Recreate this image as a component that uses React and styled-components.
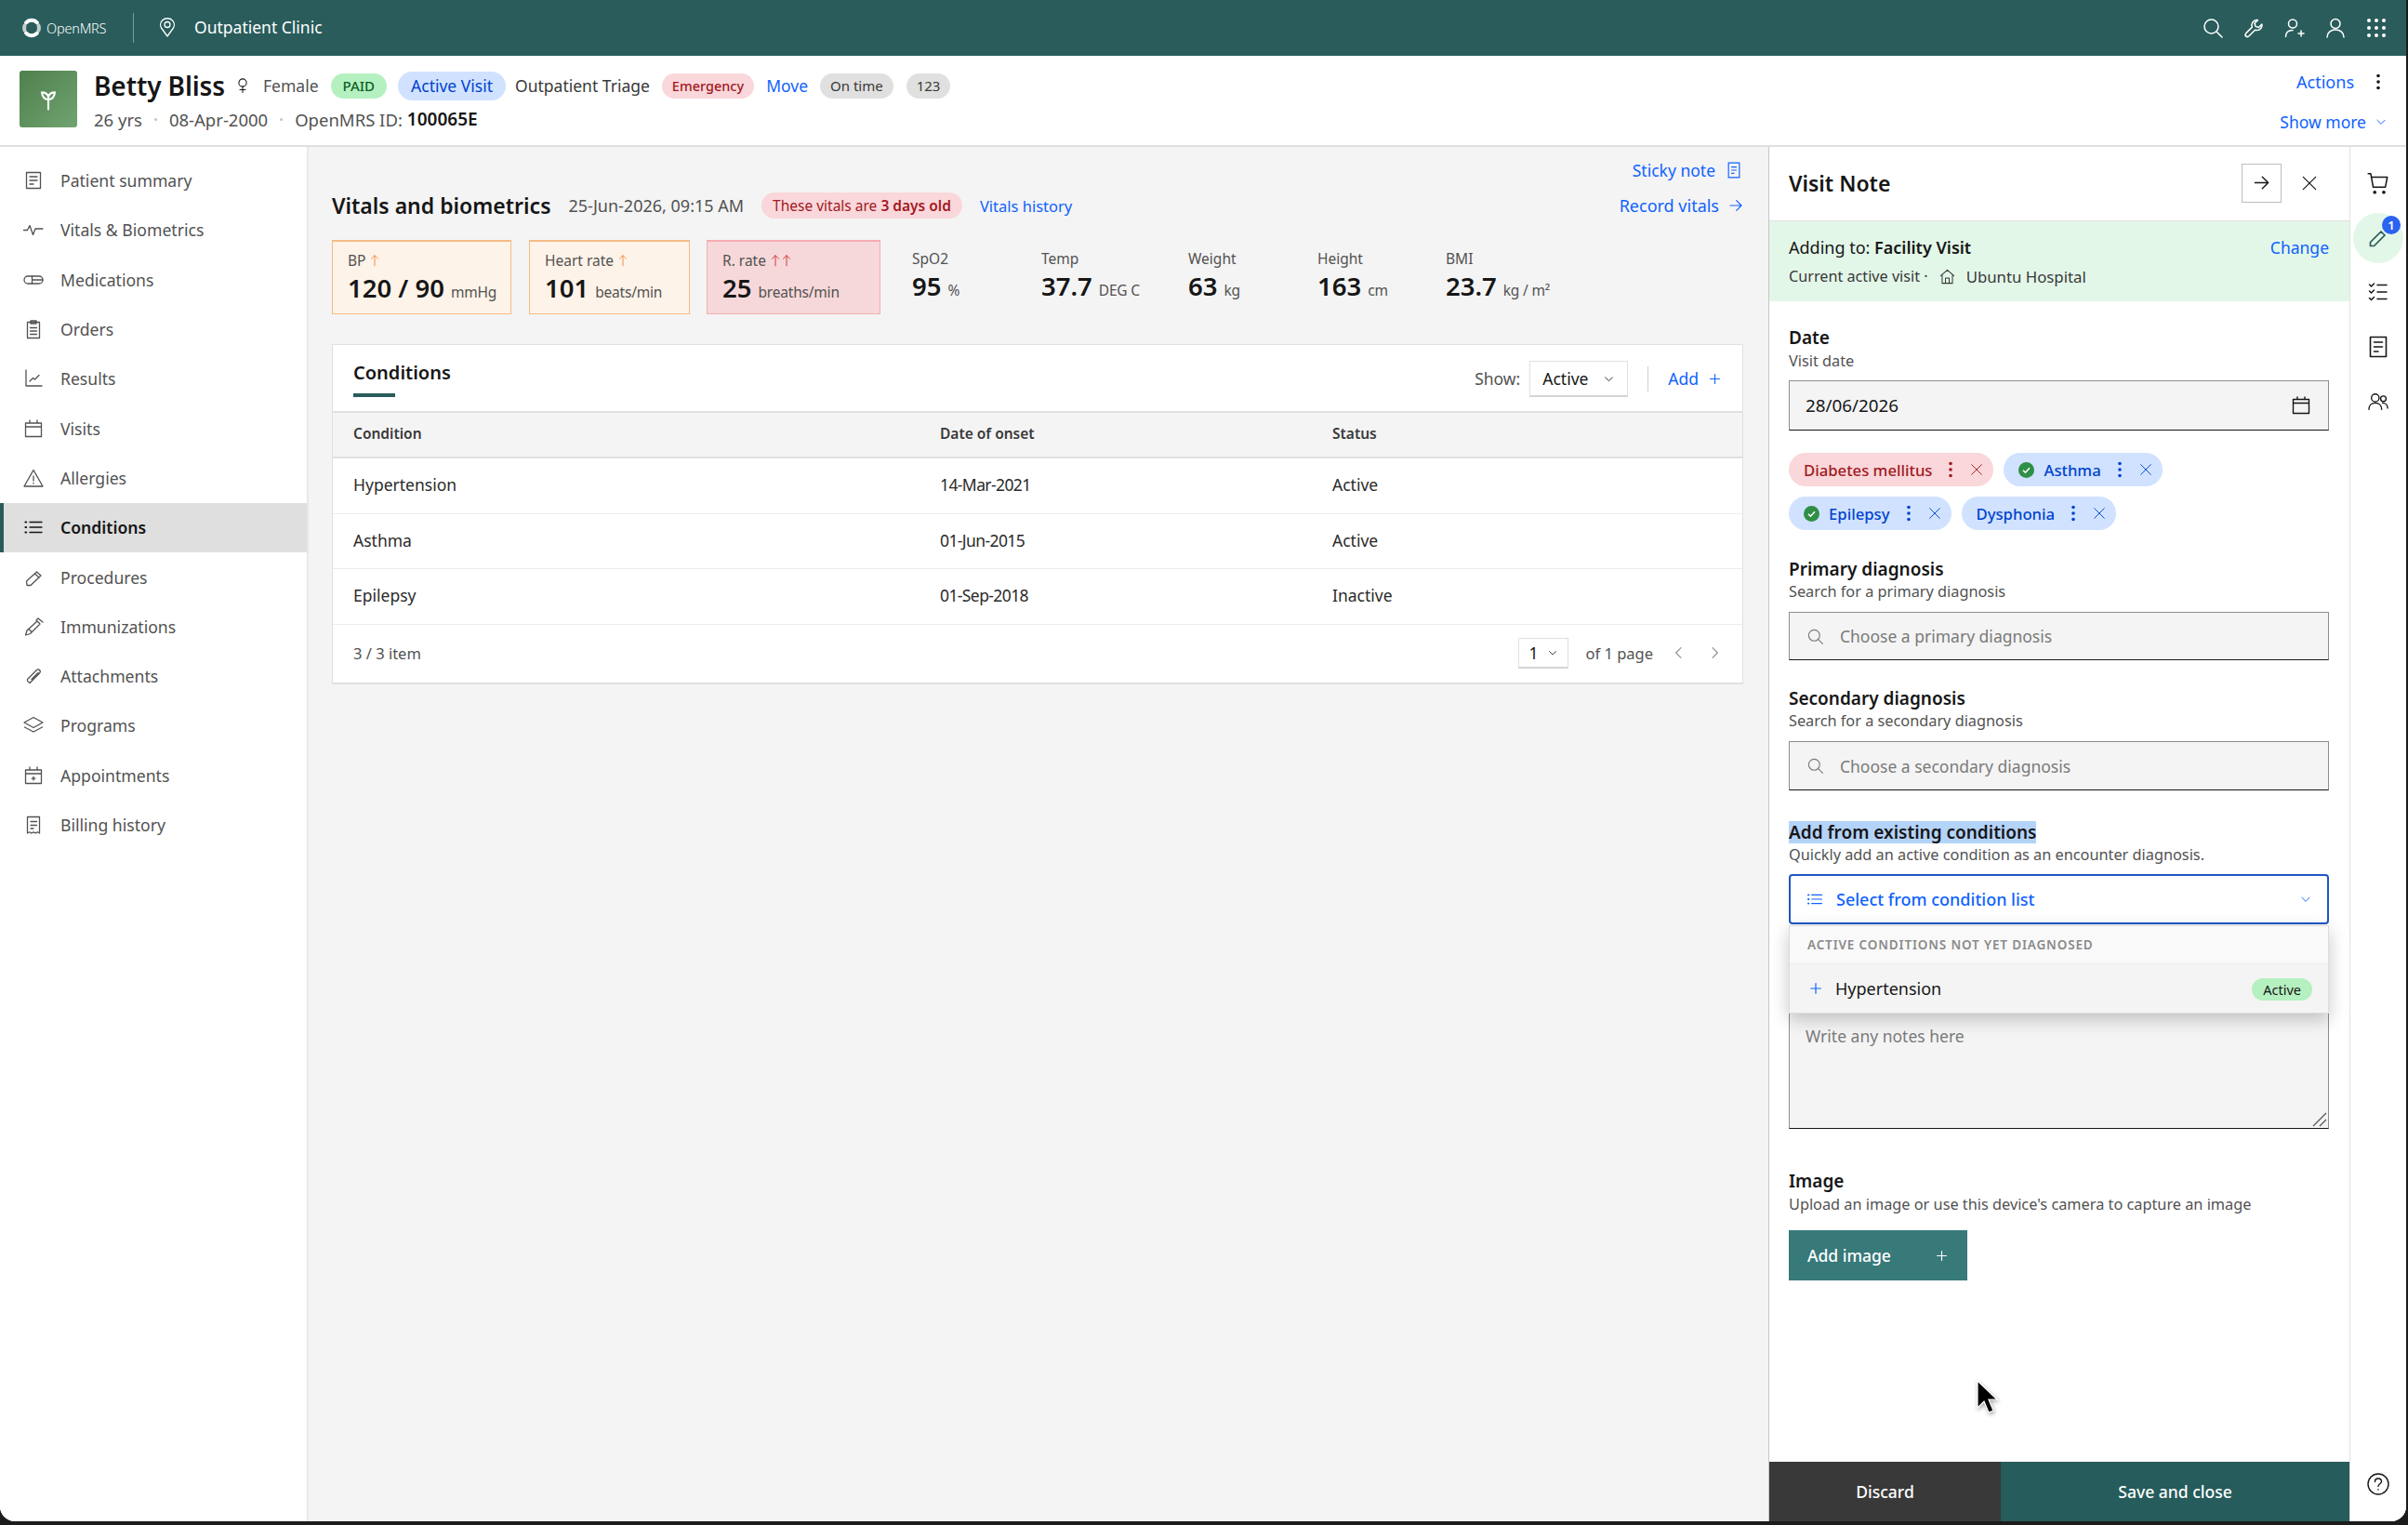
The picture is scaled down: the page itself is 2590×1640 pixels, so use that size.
import React from 'react';
import styled, { createGlobalStyle } from 'styled-components';

const GlobalStyle = createGlobalStyle`
  html, body {
    margin: 0;
    padding: 0;
    background: #1c1c1c;
  }
  * {
    box-sizing: border-box;
  }
  body {
    font-family: "Noto Sans", "Open Sans", Arial, sans-serif;
    color: #161616;
    font-size: 18px;
    letter-spacing: 0;
  }
`;

const Shell = styled.div`
  position: relative;
  width: 2590px;
  height: 1640px;
  background: #1c1c1c;
  overflow: hidden;
`;

const Window = styled.div`
  width: 2588px;
  height: 1636px;
  background: #fff;
  border-radius: 0 0 16px 16px;
  overflow: hidden;
  display: flex;
  flex-direction: column;
`;

const TopBar = styled.header`
  height: 60px;
  flex: none;
  background: #295c5b;
  color: #fff;
  display: flex;
  align-items: center;
  padding: 0 20px 0 24px;
`;

const Logo = styled.div`
  display: flex;
  align-items: center;
  gap: 6px;
  width: 119px;
  font-size: 14.5px;
  font-weight: 300;
  letter-spacing: -0.2px;
`;

const BarDivider = styled.div`
  width: 1px;
  height: 32px;
  background: rgba(255, 255, 255, 0.4);
  margin-right: 24px;
`;

const Location = styled.div`
  display: flex;
  align-items: center;
  gap: 17px;
  font-size: 17.5px;
  margin-top: -2px;
`;

const BarIcons = styled.div`
  margin-left: auto;
  display: flex;
  align-items: center;
  gap: 20px;
`;

const Svg = styled.svg`
  flex: none;
  display: block;
  fill: none;
  stroke: currentColor;
  stroke-width: ${({ $w }) => $w || 1.4};
  stroke-linecap: round;
  stroke-linejoin: round;
`;

const Icon = ({ size = 24, w, children, ...rest }) => (
  <Svg width={size} height={size} viewBox="0 0 24 24" $w={w} {...rest}>
    {children}
  </Svg>
);

const Banner = styled.section`
  height: 98px;
  flex: none;
  background: #fff;
  border-bottom: 2px solid #e0e0e0;
  padding: 16px 20px 0 21px;
  display: flex;
`;

const Avatar = styled.div`
  width: 62px;
  height: 61px;
  border-radius: 3px;
  background: linear-gradient(135deg, #4f7f4c, #70a471);
  color: #fff;
  display: flex;
  align-items: center;
  justify-content: center;
  margin-right: 18px;
`;

const PatientInfo = styled.div`
  display: flex;
  flex-direction: column;
`;

const NameRow = styled.div`
  display: flex;
  align-items: center;
  height: 32px;
  font-size: 18px;
`;

const PatientName = styled.span`
  font-size: 28px;
  font-weight: 600;
  letter-spacing: -0.1px;
  margin-right: 10px;
`;

const Pill = styled.span`
  display: inline-flex;
  align-items: center;
  white-space: nowrap;
  height: ${({ $h }) => $h || 27}px;
  padding: 0 ${({ $pad }) => $pad || 12}px;
  border-radius: 16px;
  background: ${({ $bg }) => $bg};
  color: ${({ $fg }) => $fg};
  font-size: ${({ $size }) => $size || 15}px;
  font-weight: ${({ $weight }) => $weight || 400};
  margin-left: ${({ $left }) => $left || 0}px;

  b {
    font-weight: 600;
  }
`;

const Link = styled.a`
  color: #0f62fe;
  font-size: ${({ $size }) => $size || 17.5}px;
  margin-left: ${({ $left }) => $left || 0}px;
  display: inline-flex;
  align-items: center;
  white-space: nowrap;
  gap: ${({ $gap }) => $gap || 0}px;
`;

const MetaRow = styled.div`
  display: flex;
  align-items: center;
  margin-top: 9px;
  height: 22px;
  color: #525252;
  font-size: 18.5px;
  white-space: nowrap;

  b {
    color: #161616;
    font-size: 19px;
    font-weight: 600;
    margin-left: 5px;
  }
`;

const MetaDot = styled.span`
  width: 3px;
  height: 3px;
  border-radius: 50%;
  background: #c4c4c4;
  margin: 0 13px;
`;

const BannerRight = styled.div`
  margin-left: auto;
  display: flex;
  flex-direction: column;
  align-items: flex-end;
`;

const ActionsRow = styled.div`
  display: flex;
  align-items: center;
  gap: 21px;
  height: 24px;
  color: #161616;
  padding-right: 5px;
`;

const ShowMore = styled(Link)`
  margin-top: 19px;
`;

const Workspace = styled.div`
  flex: 1;
  min-height: 0;
  display: flex;
`;

const Sidebar = styled.nav`
  width: 332px;
  flex: none;
  background: #fff;
  border-right: 2px solid #e8e8e8;
  padding-top: 10px;
`;

const NavRow = styled.div`
  height: 53.3px;
  display: flex;
  align-items: center;
  gap: 17px;
  padding: 0 0 1px 24px;
  color: ${({ $active }) => ($active ? '#161616' : '#525252')};
  font-size: 17.6px;
  font-weight: ${({ $active }) => ($active ? 600 : 400)};
  background: ${({ $active }) => ($active ? '#dfdfdf' : 'transparent')};
  box-shadow: ${({ $active }) => ($active ? 'inset 4px 0 0 #295c5b' : 'none')};
`;

const Content = styled.main`
  width: 1570px;
  flex: none;
  background: #f4f4f4;
  padding: 13px 27px 0 25px;
`;

const StickyRow = styled.div`
  height: 24px;
  display: flex;
  justify-content: flex-end;
`;

const VitalsHead = styled.div`
  height: 30px;
  margin-top: 11px;
  display: flex;
  align-items: center;
`;

const VitalsTitle = styled.h2`
  margin: 0 19px 0 0;
  font-size: 23px;
  font-weight: 600;
  white-space: nowrap;
`;

const Muted = styled.span`
  color: #525252;
  font-size: ${({ $size }) => $size || 16}px;
  white-space: nowrap;
`;

const PushRight = styled.div`
  margin-left: auto;
`;

const VitalsRow = styled.div`
  margin-top: 22px;
  height: 80px;
  display: flex;
`;

const Tile = styled.div`
  width: ${({ $width }) => $width}px;
  margin-right: ${({ $gap }) => $gap || 0}px;
  background: ${({ $alert }) => ($alert === 'red' ? '#f7d8da' : '#fdf3e8')};
  border: 1px solid ${({ $alert }) => ($alert === 'red' ? '#f3aeb3' : '#f5bb85')};
  border-top-width: 2px;
  padding: 10px 0 0 16px;
`;

const PlainVital = styled.div`
  width: ${({ $width }) => $width}px;
  margin-left: ${({ $left }) => $left || 0}px;
  padding-top: 10px;
`;

const VitalLabel = styled.div`
  display: flex;
  align-items: center;
  gap: 3px;
  height: 20px;
  color: #525252;
  font-size: 15.5px;
`;

const VitalValue = styled.div`
  margin-top: 4px;
  display: flex;
  align-items: baseline;
  gap: 7px;
  font-size: 27.5px;
  line-height: 32px;
  font-weight: 600;
  white-space: nowrap;
`;

const VitalUnit = styled.span`
  color: #525252;
  font-size: 15.5px;
  font-weight: 400;
  letter-spacing: -0.2px;
`;

const AlertArrow = styled.span`
  display: inline-flex;
  color: ${({ $color }) => $color};

  & + & {
    margin-left: -5px;
  }
`;

const Card = styled.section`
  margin-top: 32px;
  background: #fff;
  border: 1px solid #e0e0e0;
  border-bottom-width: 2px;
`;

const CardHead = styled.div`
  height: 71px;
  display: flex;
  padding: 0 22px;
`;

const CardTitle = styled.div`
  position: relative;
  padding-top: 16px;
  font-size: 20px;
  font-weight: 600;
  height: 56px;

  &::after {
    content: '';
    position: absolute;
    left: 0;
    bottom: 0;
    width: 45px;
    height: 4px;
    background: #295c5b;
  }
`;

const CardTools = styled.div`
  margin-left: auto;
  display: flex;
  align-items: flex-start;
  padding-top: 17px;
`;

const Select = styled.div`
  display: flex;
  align-items: center;
  justify-content: space-between;
  width: ${({ $width }) => $width}px;
  height: ${({ $h }) => $h}px;
  padding: 0 ${({ $pad }) => $pad}px 0 ${({ $padL }) => $padL}px;
  background: #fff;
  border: 1px solid #e0e0e0;
  border-bottom: 2px solid #d4d4d4;
  color: #161616;
  font-size: 17.5px;
  margin-left: ${({ $left }) => $left || 0}px;
`;

const ToolDivider = styled.div`
  width: 1px;
  height: 27px;
  background: #d0d0d0;
  margin: 6px 21px 0;
`;

const ToolLabel = styled(Muted)`
  line-height: 38px;
  font-size: 17.5px;
`;

const ToolLink = styled.span`
  line-height: 38px;
`;

const TableRow = styled.div`
  display: grid;
  grid-template-columns: 631px 422px 1fr;
  align-items: center;
  height: ${({ $h }) => $h}px;
  padding: 0 0 3px 22px;
  background: ${({ $head }) => ($head ? '#f4f4f4' : '#fff')};
  border-top: ${({ $head }) => ($head ? '2px solid #e0e0e0' : 'none')};
  border-bottom: ${({ $head }) => ($head ? '2px solid #e0e0e0' : '1px solid #ececec')};
  font-size: ${({ $head }) => ($head ? 15.5 : 17.5)}px;
  font-weight: ${({ $head }) => ($head ? 600 : 400)};
  color: ${({ $head }) => ($head ? '#393939' : '#2a2a2a')};

  span:nth-child(2) {
    letter-spacing: ${({ $head }) => ($head ? 0 : -0.6)}px;
  }
`;

const CardFoot = styled.div`
  height: 62px;
  display: flex;
  align-items: center;
  padding: 0 22px 2px;
`;

const Pager = styled.div`
  margin-left: auto;
  display: flex;
  align-items: center;
  color: #8d8d8d;
`;

const PagerGap = styled.span`
  width: 22px;
`;

const PagerText = styled(Muted)`
  margin: 0 20px 0 18px;
`;

const Panel = styled.aside`
  width: 625px;
  flex: none;
  background: #fff;
  border-left: 1px solid #c6c6c6;
  display: flex;
  flex-direction: column;
`;

const PanelHead = styled.div`
  height: 80px;
  flex: none;
  border-bottom: 1px solid #e0e0e0;
  display: flex;
  align-items: center;
  padding: 0 33px 2px 21px;
`;

const PanelTitle = styled.h2`
  margin: 0;
  font-size: 23px;
  font-weight: 600;
`;

const SquareButton = styled.div`
  margin-left: auto;
  width: 43px;
  height: 42px;
  border: 1px solid #bdbdbd;
  display: flex;
  align-items: center;
  justify-content: center;
  margin-right: 20px;
`;

const VisitBand = styled.div`
  height: 86px;
  flex: none;
  background: #e3f7e9;
  padding: 16px 22px 0 21px;
  font-size: 18px;
`;

const BandRow = styled.div`
  display: flex;
  align-items: center;
  justify-content: space-between;
  height: 24px;

  b {
    font-weight: 600;
  }
`;

const BandSub = styled.div`
  display: flex;
  align-items: center;
  margin-top: 7px;
  height: 24px;
  font-size: 16.2px;
  color: #393939;
  gap: 11px;

  span:last-child {
    font-size: 16.8px;
  }
`;

const PanelBody = styled.div`
  flex: 1;
  min-height: 0;
  padding: 27px 22px 0 21px;
`;

const FieldLabel = styled.div`
  margin-top: ${({ $top }) => $top || 0}px;
  height: 24px;
  line-height: 24px;
  font-size: 19px;
  font-weight: 600;
`;

const FieldHint = styled.div`
  margin-top: ${({ $top }) => $top ?? 2}px;
  height: 20px;
  line-height: 20px;
  font-size: 16.3px;
  color: #525252;
`;

const InputBox = styled.div`
  margin-top: ${({ $top }) => $top || 12}px;
  height: ${({ $h }) => $h}px;
  display: flex;
  align-items: ${({ $area }) => ($area ? 'flex-start' : 'center')};
  background: #f4f4f4;
  border: 1px solid #8d8d8d;
  border-bottom-color: #161616;
  padding: ${({ $area }) => ($area ? '12px 17px' : '0 17px 0 17px')};
  font-size: ${({ $size }) => $size || 17.5}px;
  color: ${({ $placeholder }) => ($placeholder ? '#7a7a7a' : '#161616')};
  position: relative;
`;

const SearchInput = styled(InputBox)`
  gap: 17px;
  padding-left: 18px;
`;

const EndIcon = styled.span`
  margin-left: auto;
  color: ${({ $color }) => $color || '#161616'};
`;

const ResizeGrip = styled.svg`
  position: absolute;
  right: 1px;
  bottom: 1px;
`;

const TagWrap = styled.div`
  margin-top: 24px;
  display: flex;
  flex-wrap: wrap;
  gap: 11px;
  width: 440px;
`;

const Tag = styled.span`
  height: 36px;
  display: inline-flex;
  align-items: center;
  padding: 0 10px 0 16px;
  border-radius: 18px;
  background: ${({ $red }) => ($red ? '#f9d7da' : '#d0e2ff')};
  color: ${({ $red }) => ($red ? '#a2191f' : '#0043ce')};
  font-size: 16.7px;
  font-weight: 500;
  white-space: nowrap;
`;

const TagCheck = styled.span`
  display: inline-flex;
  margin-right: 10px;
`;

const TagKebab = styled.span`
  display: inline-flex;
  margin: 0 15px 0 15px;
`;

const Highlight = styled.span`
  background: #b4d3f8;
  display: inline-block;
`;

const ConditionPicker = styled.div`
  position: relative;
  margin-top: 11px;
`;

const PickerButton = styled.div`
  height: 54px;
  display: flex;
  align-items: center;
  padding: 0 16px 0 16px;
  gap: 13px;
  border: 2px solid #1f56c4;
  border-radius: 4px;
  background: #fff;
  color: #0f62fe;
  font-size: 18px;
  font-weight: 500;
`;

const PickerMenu = styled.div`
  position: absolute;
  left: 0;
  right: 0;
  top: 55px;
  z-index: 2;
  background: #f4f4f4;
  border: 1px solid #dcdcdc;
  box-shadow: 0 6px 18px rgba(0, 0, 0, 0.22);
`;

const MenuHeading = styled.div`
  height: 41px;
  display: flex;
  align-items: center;
  padding-left: 19px;
  background: #f9f9f9;
  border-bottom: 1px solid #ececec;
  color: #8a8a8a;
  font-size: 13.5px;
  font-weight: 600;
  letter-spacing: 0.85px;
`;

const MenuItem = styled.div`
  height: 52px;
  display: flex;
  align-items: center;
  padding: 0 17px 0 20px;
  gap: 13px;
  font-size: 18px;
  color: #0f62fe;

  span:first-of-type {
    color: #161616;
  }
`;

const AddButton = styled.div`
  margin-top: 18px;
  width: 192px;
  height: 54px;
  background: #38797a;
  color: #fff;
  display: flex;
  align-items: center;
  justify-content: space-between;
  padding: 0 20px;
  font-size: 17.5px;
  font-weight: 500;
`;

const PanelFoot = styled.div`
  height: 64px;
  flex: none;
  display: flex;
  color: #fff;
  font-size: 17.5px;
  font-weight: 500;
`;

const FootButton = styled.div`
  width: ${({ $width }) => ($width ? `${$width}px` : 'auto')};
  flex: ${({ $width }) => ($width ? 'none' : 1)};
  background: ${({ $bg }) => $bg};
  display: flex;
  align-items: center;
  justify-content: center;
`;

const Rail = styled.div`
  width: 61px;
  flex: none;
  background: #fff;
  border-left: 1px solid #e0e0e0;
  display: flex;
  flex-direction: column;
  align-items: center;
  padding: 10px 0 28px;
  color: #161616;
`;

const RailItem = styled.div`
  height: 58.6px;
  display: flex;
  align-items: center;
  justify-content: center;
`;

const RailActive = styled.div`
  position: relative;
  width: 54px;
  height: 54px;
  border-radius: 50%;
  background: #e3f7e9;
  color: #295c5b;
  display: flex;
  align-items: center;
  justify-content: center;
`;

const RailBadge = styled.span`
  position: absolute;
  top: 3px;
  left: 31px;
  width: 20px;
  height: 20px;
  border-radius: 50%;
  background: #2b62f2;
  color: #fff;
  font-size: 13px;
  font-weight: 600;
  display: flex;
  align-items: center;
  justify-content: center;
`;

const RailHelp = styled.div`
  margin-top: auto;
`;

const Cursor = styled.svg`
  position: absolute;
  left: 2125px;
  top: 1484px;
  filter: drop-shadow(1px 2px 2px rgba(0, 0, 0, 0.35));
`;

const GenderLabel = styled(Muted)`
  margin-left: 13px;
  font-size: 17.5px;
`;

const VisitType = styled(Muted)`
  margin-left: 10px;
  font-size: 17.5px;
  color: #393939;
`;

const Chevron = ({ size = 14, dir = 'down' }) => (
  <Icon size={size} w={1.6}>
    {dir === 'down' && <path d="M5 9l7 7 7-7" />}
    {dir === 'left' && <path d="M15 4l-8 8 8 8" />}
    {dir === 'right' && <path d="M9 4l8 8-8 8" />}
  </Icon>
);

const Plus = ({ size = 16 }) => (
  <Icon size={size} w={1.8}>
    <path d="M12 4v16M4 12h16" />
  </Icon>
);

const Close = ({ size = 16, w = 1.4 }) => (
  <Icon size={size} w={w}>
    <path d="M4 4l16 16M20 4L4 20" />
  </Icon>
);

const Kebab = () => (
  <svg width="10" height="20" viewBox="0 0 10 20" fill="currentColor">
    <circle cx="5" cy="3.5" r="1.8" />
    <circle cx="5" cy="10" r="1.8" />
    <circle cx="5" cy="16.5" r="1.8" />
  </svg>
);

const ArrowRight = ({ size = 16 }) => (
  <Icon size={size} w={1.8}>
    <path d="M3 12h18M13 4l8 8-8 8" />
  </Icon>
);

const ArrowUp = () => (
  <Icon size={14} w={1.6}>
    <path d="M12 22V3M6 9l6-6 6 6" />
  </Icon>
);

const SearchGlyph = ({ size = 22, w = 1.4 }) => (
  <Icon size={size} w={w}>
    <circle cx="10.5" cy="10.5" r="7.5" />
    <path d="M16 16l6 6" />
  </Icon>
);

const ListGlyph = ({ size = 24 }) => (
  <Icon size={size}>
    <path d="M8 6.5h13M8 12h13M8 17.5h13" />
    <path d="M3.5 6.5h.6M3.5 12h.6M3.5 17.5h.6" strokeWidth="2.2" />
  </Icon>
);

const CalendarGlyph = ({ size = 24 }) => (
  <Icon size={size}>
    <path d="M3.5 5.5h17v15h-17zM3.5 9.5h17M8 3v2.5M16 3v2.5" />
  </Icon>
);

const CheckCircle = () => (
  <svg width="17" height="17" viewBox="0 0 17 17">
    <circle cx="8.5" cy="8.5" r="8.5" fill="#2f8f46" />
    <path d="M5 8.8l2.4 2.4L12 6.3" fill="none" stroke="#fff" strokeWidth="1.6" />
  </svg>
);

const navItems = [
  {
    label: 'Patient summary',
    icon: <path d="M4.5 3.5h15v17h-15zM8 8h8M8 12h8M8 16h4" />,
  },
  {
    label: 'Vitals & Biometrics',
    icon: <path d="M1.5 12.5h4l2.5-5 3.5 10 2.5-6.5h8" />,
  },
  {
    label: 'Medications',
    icon: (
      <>
        <rect x="2" y="8" width="20" height="8" rx="4" />
        <path d="M10.5 8v8M10.5 12H22" />
      </>
    ),
  },
  {
    label: 'Orders',
    icon: (
      <>
        <path d="M5.5 4.5h13v17h-13z" />
        <path d="M9 3h6v3H9zM8.5 10.5h7M8.5 14h7M8.5 17.5h7" />
      </>
    ),
  },
  {
    label: 'Results',
    icon: <path d="M4 3v17h17M8 15l3.5-3.5 2 1.5 4.5-4.5" />,
  },
  {
    label: 'Visits',
    icon: <path d="M3.5 6h17v14.5h-17zM3.5 10h17M8 3v3M16 3v3" />,
  },
  {
    label: 'Allergies',
    icon: <path d="M12 3.5L22 21H2zM12 10v5M12 17.5v.5" />,
  },
  {
    label: 'Conditions',
    icon: (
      <>
        <path d="M8 6.5h13M8 12h13M8 17.5h13" />
        <path d="M3.5 6.5h.6M3.5 12h.6M3.5 17.5h.6" strokeWidth="2.2" />
      </>
    ),
  },
  {
    label: 'Procedures',
    icon: <path d="M4.5 16L15.5 6l4.5 4-11 10.5H5zM13.5 8l4.5 4" />,
  },
  {
    label: 'Immunizations',
    icon: <path d="M3.5 21l1.5-5L16 6l3 3L8.5 19.5zM7 14.5l3 3M15 5l2-2 5 4" />,
  },
  {
    label: 'Attachments',
    icon: <path d="M8 19.5L18.5 9c2-2-.5-5.5-3-3.5L6 15c-1.5 1.5 0 4 2 4M10 15.5l7-7" />,
  },
  {
    label: 'Programs',
    icon: <path d="M12 3.5L22 9l-10 5.5L2 9zM2.5 14l9.5 5 9.5-5" />,
  },
  {
    label: 'Appointments',
    icon: <path d="M3.5 6h17v14.5h-17zM3.5 10h17M8 3v3M16 3v3M12 13.5V17M10.2 15.2h3.6" />,
  },
  {
    label: 'Billing history',
    icon: (
      <path d="M5.5 3.5h13V21l-2.2-1.2-2 1.2-2.3-1.2-2.3 1.2-2-1.2L5.5 21zM9 8.5h6.5M9 12.5h6.5M9 16h3" />
    ),
  },
];

const conditions = [
  ['Hypertension', '14-Mar-2021', 'Active'],
  ['Asthma', '01-Jun-2015', 'Active'],
  ['Epilepsy', '01-Sep-2018', 'Inactive'],
];

const plainVitals = [
  { label: 'SpO2', value: '95', unit: '%', width: 139, left: 34 },
  { label: 'Temp', value: '37.7', unit: 'DEG C', width: 158 },
  { label: 'Weight', value: '63', unit: 'kg', width: 139 },
  { label: 'Height', value: '163', unit: 'cm', width: 138 },
  { label: 'BMI', value: '23.7', unit: 'kg / m²', width: 180 },
];

const PatientBanner = () => (
  <Banner>
    <Avatar>
      <Icon size={28} w={1.8}>
        <path d="M12 21V10M12 12C8 12 6.5 9.5 6 5.5c3 0 5 1 6 4 1-3 3-4 6-4-.5 4-2 6.5-6 6.5z" />
      </Icon>
    </Avatar>
    <PatientInfo>
      <NameRow>
        <PatientName>Betty Bliss</PatientName>
        <Icon size={18} w={1.4}>
          <circle cx="12" cy="8" r="5.5" />
          <path d="M12 13.5V22M8 18h8" />
        </Icon>
        <GenderLabel>Female</GenderLabel>
        <Pill $bg="#b5f0c0" $fg="#0e6027" $left={13} $pad={13} $weight={500} $size={15}>PAID</Pill>
        <Pill $bg="#d0e2ff" $fg="#0043ce" $left={12} $h={31} $pad={14} $size={17.5}>Active Visit</Pill>
        <VisitType>Outpatient Triage</VisitType>
        <Pill $bg="#f9d7da" $fg="#a2191f" $left={13} $pad={11} $weight={500} $size={14.5}>Emergency</Pill>
        <Link $left={13}>Move</Link>
        <Pill $bg="#e0e0e0" $fg="#393939" $left={13} $pad={11}>On time</Pill>
        <Pill $bg="#e0e0e0" $fg="#393939" $left={14} $pad={11}>123</Pill>
      </NameRow>
      <MetaRow>
        26 yrs
        <MetaDot />
        08-Apr-2000
        <MetaDot />
        OpenMRS ID: <b>100065E</b>
      </MetaRow>
    </PatientInfo>
    <BannerRight>
      <ActionsRow>
        <Link $size={18}>Actions</Link>
        <Kebab />
      </ActionsRow>
      <ShowMore $gap={9}>
        Show more
        <Chevron size={14} />
      </ShowMore>
    </BannerRight>
  </Banner>
);

const VitalsSection = () => (
  <>
    <StickyRow>
      <Link $gap={10}>
        Sticky note
        <Icon size={20}>
          <path d="M5 2.5h14v19H5zM9 8h6M9 12h6M9 16h3" />
        </Icon>
      </Link>
    </StickyRow>
    <VitalsHead>
      <VitalsTitle>Vitals and biometrics</VitalsTitle>
      <Muted $size={18}>25-Jun-2026, 09:15 AM</Muted>
      <Pill $bg="#f9d7da" $fg="#a2191f" $h={28} $left={19} $size={15.5}>
        These vitals are&nbsp;<b>3 days old</b>
      </Pill>
      <Link $left={19} $size={16.5}>Vitals history</Link>
      <PushRight>
        <Link $gap={10} $size={18}>
          Record vitals
          <ArrowRight />
        </Link>
      </PushRight>
    </VitalsHead>
    <VitalsRow>
      <Tile $width={193} $gap={19}>
        <VitalLabel>
          BP
          <AlertArrow $color="#f0883e"><ArrowUp /></AlertArrow>
        </VitalLabel>
        <VitalValue>
          120 / 90 <VitalUnit>mmHg</VitalUnit>
        </VitalValue>
      </Tile>
      <Tile $width={173} $gap={18}>
        <VitalLabel>
          Heart rate
          <AlertArrow $color="#f0883e"><ArrowUp /></AlertArrow>
        </VitalLabel>
        <VitalValue>
          101 <VitalUnit>beats/min</VitalUnit>
        </VitalValue>
      </Tile>
      <Tile $width={187} $alert="red">
        <VitalLabel>
          R. rate
          <AlertArrow $color="#c8322f"><ArrowUp /></AlertArrow>
          <AlertArrow $color="#c8322f"><ArrowUp /></AlertArrow>
        </VitalLabel>
        <VitalValue>
          25 <VitalUnit>breaths/min</VitalUnit>
        </VitalValue>
      </Tile>
      {plainVitals.map(v => (
        <PlainVital key={v.label} $width={v.width} $left={v.left}>
          <VitalLabel>{v.label}</VitalLabel>
          <VitalValue>
            {v.value} <VitalUnit>{v.unit}</VitalUnit>
          </VitalValue>
        </PlainVital>
      ))}
    </VitalsRow>
  </>
);

const ConditionsCard = () => (
  <Card>
    <CardHead>
      <CardTitle>Conditions</CardTitle>
      <CardTools>
        <ToolLabel>Show:</ToolLabel>
        <Select $width={106} $h={39} $pad={13} $padL={13} $left={10}>
          Active
          <Chevron size={13} />
        </Select>
        <ToolDivider />
        <Link $gap={10}>
          <ToolLink>Add</ToolLink>
          <Plus size={15} />
        </Link>
      </CardTools>
    </CardHead>
    <TableRow $head $h={51}>
      <span>Condition</span>
      <span>Date of onset</span>
      <span>Status</span>
    </TableRow>
    {conditions.map(row => (
      <TableRow key={row[0]} $h={59.7}>
        {row.map(cell => (
          <span key={cell}>{cell}</span>
        ))}
      </TableRow>
    ))}
    <CardFoot>
      <Muted $size={16.5}>3 / 3 item</Muted>
      <Pager>
        <Select $width={54} $h={33} $pad={10} $padL={10}>
          1
          <Chevron size={12} />
        </Select>
        <PagerText $size={16.5}>of 1 page</PagerText>
        <Chevron size={16} dir="left" />
        <PagerGap />
        <Chevron size={16} dir="right" />
      </Pager>
    </CardFoot>
  </Card>
);

const VisitPanel = () => (
  <Panel>
    <PanelHead>
      <PanelTitle>Visit Note</PanelTitle>
      <SquareButton>
        <ArrowRight size={19} />
      </SquareButton>
      <Close size={20} w={1.5} />
    </PanelHead>
    <VisitBand>
      <BandRow>
        <span>Adding to: <b>Facility Visit</b></span>
        <Link>Change</Link>
      </BandRow>
      <BandSub>
        <span>Current active visit ·</span>
        <Icon size={19} w={1.3}>
          <path d="M3 11l9-8 9 8M5 9v12h14V9M9.5 21v-7h5v7" />
        </Icon>
        <span>Ubuntu Hospital</span>
      </BandSub>
    </VisitBand>
    <PanelBody>
      <FieldLabel>Date</FieldLabel>
      <FieldHint $top={3}>Visit date</FieldHint>
      <InputBox $h={54} $top={11} $size={18.8}>
        28/06/2026
        <EndIcon><CalendarGlyph /></EndIcon>
      </InputBox>
      <TagWrap>
        <Tag $red>
          Diabetes mellitus
          <TagKebab><Kebab /></TagKebab>
          <Close size={16} />
        </Tag>
        <Tag>
          <TagCheck><CheckCircle /></TagCheck>
          Asthma
          <TagKebab><Kebab /></TagKebab>
          <Close size={16} />
        </Tag>
        <Tag>
          <TagCheck><CheckCircle /></TagCheck>
          Epilepsy
          <TagKebab><Kebab /></TagKebab>
          <Close size={16} />
        </Tag>
        <Tag>
          Dysphonia
          <TagKebab><Kebab /></TagKebab>
          <Close size={16} />
        </Tag>
      </TagWrap>
      <FieldLabel $top={30}>Primary diagnosis</FieldLabel>
      <FieldHint>Search for a primary diagnosis</FieldHint>
      <SearchInput $h={52} $placeholder>
        <SearchGlyph size={19} />
        Choose a primary diagnosis
      </SearchInput>
      <FieldLabel $top={29}>Secondary diagnosis</FieldLabel>
      <FieldHint>Search for a secondary diagnosis</FieldHint>
      <SearchInput $h={53} $placeholder>
        <SearchGlyph size={19} />
        Choose a secondary diagnosis
      </SearchInput>
      <FieldLabel $top={33}>
        <Highlight>Add from existing conditions</Highlight>
      </FieldLabel>
      <FieldHint>Quickly add an active condition as an encounter diagnosis.</FieldHint>
      <ConditionPicker>
        <PickerButton>
          <ListGlyph size={20} />
          Select from condition list
          <EndIcon $color="#0f62fe"><Chevron size={14} /></EndIcon>
        </PickerButton>
        <PickerMenu>
          <MenuHeading>ACTIVE CONDITIONS NOT YET DIAGNOSED</MenuHeading>
          <MenuItem>
            <Plus size={16} />
            <span>Hypertension</span>
            <EndIcon>
              <Pill $bg="#b5f0c0" $fg="#0e6027" $h={24} $size={14.5} $pad={12}>Active</Pill>
            </EndIcon>
          </MenuItem>
        </PickerMenu>
      </ConditionPicker>
      <InputBox $area $h={125} $top={95} $placeholder>
        Write any notes here
        <ResizeGrip width="16" height="16" viewBox="0 0 16 16" fill="none" stroke="#555" strokeWidth="1.2">
          <path d="M1 15L15 1M8 15l7-7" />
        </ResizeGrip>
      </InputBox>
      <FieldLabel $top={44}>Image</FieldLabel>
      <FieldHint $top={3}>Upload an image or use this device's camera to capture an image</FieldHint>
      <AddButton>
        Add image
        <Plus size={15} />
      </AddButton>
    </PanelBody>
    <PanelFoot>
      <FootButton $width={249} $bg="#393939">Discard</FootButton>
      <FootButton $bg="#265c5b">Save and close</FootButton>
    </PanelFoot>
  </Panel>
);

const SideRail = () => (
  <Rail>
    <RailItem>
      <Icon size={26} w={1.4}>
        <path d="M2 2.5h2.5L7 16h12l2-10H5.5" />
        <circle cx="8.5" cy="21" r="1" fill="currentColor" />
        <circle cx="17.5" cy="21" r="1" fill="currentColor" />
      </Icon>
    </RailItem>
    <RailItem>
      <RailActive>
        <Icon size={24} w={1.7}>
          <path d="M3.5 20.5v-4L15 5l4 4L7.5 20.5z" />
        </Icon>
        <RailBadge>1</RailBadge>
      </RailActive>
    </RailItem>
    <RailItem>
      <Icon size={24} w={1.5}>
        <path d="M11 4.5h10M11 12h10M11 19.5h10M2.5 4l2 2 3-3M2.5 11l2 2 3-3M2.5 18.5l2 2 3-3" />
      </Icon>
    </RailItem>
    <RailItem>
      <Icon size={24} w={1.6}>
        <path d="M3.5 1.5h17v21h-17zM7.5 7h9M7.5 12h9M7.5 17h4.5" />
      </Icon>
    </RailItem>
    <RailItem>
      <Icon size={22} w={1.5}>
        <circle cx="8.5" cy="7.5" r="4.5" />
        <circle cx="18" cy="8.5" r="3.2" />
        <path d="M1 21c0-4.5 3-7.5 7.5-7.5S16 16.5 16 21M17 13.5c3.5 0 6 2.5 6 6" />
      </Icon>
    </RailItem>
    <RailHelp>
      <Icon size={24} w={1.4}>
        <circle cx="12" cy="12" r="11" />
        <path d="M8.5 9.5C8.5 7.5 10 6 12 6s3.5 1.5 3.5 3.2c0 2.6-3.5 2.6-3.5 5.3M12 17.8v.2" />
      </Icon>
    </RailHelp>
  </Rail>
);

const App = () => (
  <Shell>
    <GlobalStyle />
    <Window>
      <TopBar>
        <Logo>
          <svg width="20" height="24" viewBox="0 0 20 24" fill="none" strokeWidth="4" strokeLinecap="round">
            <path d="M4 6.5A8 8 0 0 1 16 6.5" stroke="#fff" />
            <path d="M4 17.5A8 8 0 0 0 16 17.5" stroke="#fff" />
            <path d="M2.5 9.5a8 8 0 0 0 0 5M17.5 9.5a8 8 0 0 1 0 5" stroke="#c4cfce" />
          </svg>
          OpenMRS
        </Logo>
        <BarDivider />
        <Location>
          <Icon size={24} w={1.3}>
            <circle cx="12" cy="9.5" r="3" />
            <path d="M12 22l-6.5-9C4 10.5 4.5 7 6.5 5c3-3 8-3 11 0 2 2 2.5 5.5 1 8z" />
          </Icon>
          Outpatient Clinic
        </Location>
        <BarIcons>
          <SearchGlyph size={24} w={1.5} />
          <Icon size={24} w={1.5}>
            <path d="M15 3.5a5.5 5.5 0 0 0-4.6 7.6L3.6 17.9a2.2 2.2 0 0 0 3.1 3.1l6.8-6.8A5.5 5.5 0 0 0 21 9l-.2-.9-3.4 3.4-3.4-1.1-1-3.4L16.4 3.6z" />
          </Icon>
          <Icon size={24} w={1.5}>
            <circle cx="10" cy="7.5" r="4.5" />
            <path d="M2.5 21.5c0-4.5 3-7 7.5-7M16 18h6M19 15v6" />
          </Icon>
          <Icon size={24} w={1.5}>
            <circle cx="12" cy="7.5" r="5" />
            <path d="M3 22c0-5 4-8 9-8s9 3 9 8" />
          </Icon>
          <Icon size={24}>
            {[4, 12, 20].map(y =>
              [4, 12, 20].map(x => (
                <circle key={`${x}-${y}`} cx={x} cy={y} r="2" fill="currentColor" stroke="none" />
              ))
            )}
          </Icon>
        </BarIcons>
      </TopBar>
      <PatientBanner />
      <Workspace>
        <Sidebar>
          {navItems.map(item => (
            <NavRow key={item.label} $active={item.label === 'Conditions'}>
              <Icon size={24} w={1.3}>{item.icon}</Icon>
              {item.label}
            </NavRow>
          ))}
        </Sidebar>
        <Content>
          <VitalsSection />
          <ConditionsCard />
        </Content>
        <VisitPanel />
        <SideRail />
      </Workspace>
    </Window>
    <Cursor width="24" height="38" viewBox="0 0 24 38">
      <path d="M2 1v29l7-7 5 12 5-2-5-12h9z" fill="#000" stroke="#fff" strokeWidth="1.2" />
    </Cursor>
  </Shell>
);

export default App;
